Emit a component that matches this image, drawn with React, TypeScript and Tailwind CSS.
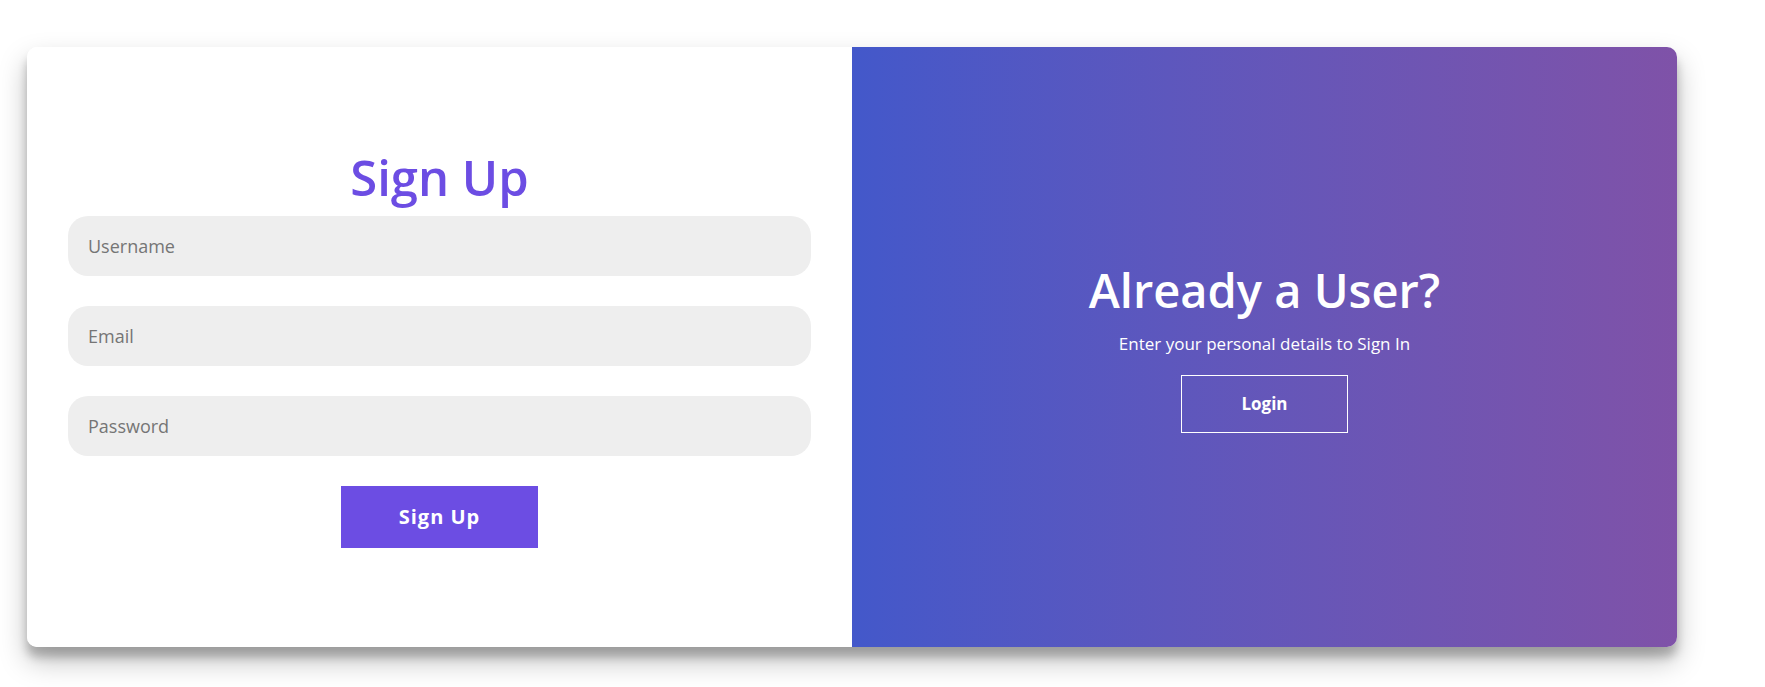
import { useState } from "react";

const FONT = "font-['Open_Sans','Noto_Sans',sans-serif]";

const SignUpForm = () => {
    const [form, setForm] = useState({ username: "", email: "", password: "" });

    const update = (key: keyof typeof form) => (e: React.ChangeEvent<HTMLInputElement>) =>
        setForm({ ...form, [key]: e.target.value });

    return (
        <form
            onSubmit={(e) => e.preventDefault()}
            className="flex w-1/2 min-w-0 flex-col items-center justify-center bg-white px-[41px]"
        >
            <h1 className="text-[49px] font-semibold leading-[62px] text-[#6c4de3]">Sign Up</h1>
            <input
                value={form.username}
                onChange={update("username")}
                placeholder="Username"
                className="mt-[8px] h-[60px] w-full min-w-0 rounded-[20px] bg-[#eeeeee] px-5 text-[18px] text-gray-700 outline-none placeholder:text-[#757575]"
            />
            <input
                type="email"
                value={form.email}
                onChange={update("email")}
                placeholder="Email"
                className="mt-[30px] h-[60px] w-full min-w-0 rounded-[20px] bg-[#eeeeee] px-5 text-[18px] text-gray-700 outline-none placeholder:text-[#757575]"
            />
            <input
                type="password"
                value={form.password}
                onChange={update("password")}
                placeholder="Password"
                className="mt-[30px] h-[60px] w-full min-w-0 rounded-[20px] bg-[#eeeeee] px-5 text-[18px] text-gray-700 outline-none placeholder:text-[#757575]"
            />
            <button
                type="submit"
                className="mt-[30px] h-[62px] w-[197px] bg-[#6c4de3] text-[20px] font-bold tracking-[1px] text-white"
            >
                Sign Up
            </button>
        </form>
    );
};

const SignInPanel = () => (
    <div className="flex w-1/2 min-w-0 flex-col items-center justify-center bg-gradient-to-r from-[#4358ca] to-[#7f52a8] pb-[4px] text-white">
        <h1 className="text-[47px] font-semibold leading-[65px]">Already a User?</h1>
        <p className="mt-[10px] text-[17px] leading-[22px]">Enter your personal details to Sign In</p>
        <button className="mt-5 h-[58px] w-[167px] border border-white text-[17px] font-bold">
            Login
        </button>
    </div>
);

export default function App() {
    return (
        <div className={`min-h-[687px] w-full bg-white pl-[27px] pt-[47px] ${FONT}`}>
            <div className="flex h-[600px] w-[1650px] overflow-hidden rounded-[10px] shadow-[0_14px_28px_rgba(0,0,0,0.25),0_10px_10px_rgba(0,0,0,0.22)]">
                <SignUpForm />
                <SignInPanel />
            </div>
        </div>
    );
}
